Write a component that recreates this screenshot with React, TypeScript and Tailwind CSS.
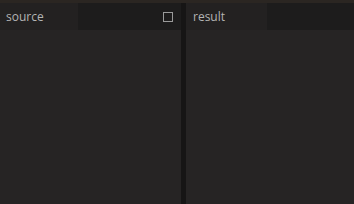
export default function App() {
  return (
    <div className="flex h-[204px] w-[354px] flex-col bg-[#252323] font-['Open_Sans',sans-serif]">
      <div className="h-[3px] bg-[#2b2622]" />
      <div className="flex flex-1">
        {/* source pane */}
        <div className="flex w-[181px] flex-col">
          <div className="flex h-[27px] items-center bg-[#1d1c1c]">
            <div className="flex h-full w-[78px] items-center bg-[#232121] pl-[6px] text-[12px] text-[#b4b4b4]">
              source
            </div>
            <div className="flex-1" />
            <div className="mr-[8px] h-[10px] w-[10px] border border-[#9a9a9a]" />
          </div>
          <div className="flex-1 bg-[#262424]" />
        </div>
        <div className="w-[5px] bg-[#161515]" />
        {/* result pane */}
        <div className="flex flex-1 flex-col">
          <div className="flex h-[27px] items-center bg-[#1d1c1c]">
            <div className="flex h-full w-[81px] items-center bg-[#232121] pl-[7px] text-[12px] text-[#b4b4b4]">
              result
            </div>
          </div>
          <div className="flex-1 bg-[#262424]" />
        </div>
      </div>
    </div>
  );
}
